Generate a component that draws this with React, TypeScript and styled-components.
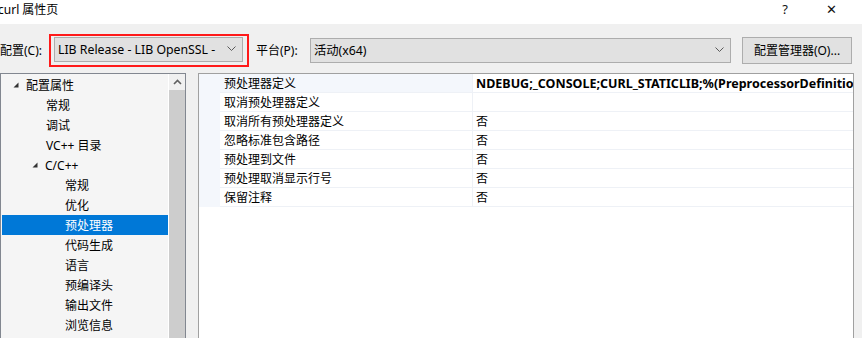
import React from 'react';
import styled, { createGlobalStyle } from 'styled-components';

const GlobalStyle = createGlobalStyle`
  html, body {
    margin: 0;
    padding: 0;
    background: #f0f0f0;
  }
  * {
    box-sizing: border-box;
  }
`;

const FONT = `"Segoe UI", "Noto Sans", "Noto Sans CJK SC", sans-serif`;

// Dialog shell
const Dialog = styled.div`
  width: 862px;
  height: 338px;
  overflow: hidden;
  background: #f0f0f0;
  font-family: ${FONT};
  font-size: 12px;
  color: #000;
  display: flex;
  flex-direction: column;
`;

const TitleBar = styled.div`
  height: 24px;
  background: #fff;
  display: flex;
  align-items: center;
  padding-right: 8px;
`;

const Title = styled.div`
  flex: 1;
  margin-left: -2px;
  margin-top: -6px;
  font-size: 12px;
`;

const TitleButton = styled.div`
  width: 46px;
  text-align: center;
  margin-top: -6px;
  font-size: 13px;
  color: #111;
`;

// Config toolbar
const Toolbar = styled.div`
  height: 48px;
  display: flex;
  align-items: center;
  padding-top: 4px;
`;

const Label = styled.span<{ $width: number }>`
  width: ${p => p.$width}px;
  flex-shrink: 0;
  white-space: nowrap;
`;

const Highlight = styled.div`
  border: 2px solid #ff1a1a;
  padding: 1px 4px 3px 3px;
  margin-right: 7px;
`;

const Combo = styled.div<{ $width: number }>`
  width: ${p => p.$width}px;
  height: 25px;
  background: #e1e1e1;
  border: 1px solid #adadad;
  display: flex;
  align-items: center;
  padding-left: 3px;
  padding-right: 6px;
  overflow: hidden;
`;

const ComboText = styled.span`
  flex: 1;
  min-width: 0;
  margin-right: 9px;
  white-space: nowrap;
  overflow: hidden;
  font-size: 12.3px;
`;

const Button = styled.div`
  margin-left: 11px;
  width: 110px;
  height: 27px;
  background: #e1e1e1;
  border: 1px solid #adadad;
  display: flex;
  align-items: center;
  justify-content: center;
  white-space: nowrap;
`;

// Body
const Body = styled.div`
  flex: 1;
  display: flex;
  align-items: stretch;
  padding-top: 1px;
`;

const TreePanel = styled.div`
  width: 186px;
  border: 1px solid #828790;
  border-bottom: none;
  background: #f5f5f5;
  display: flex;
`;

const TreeList = styled.div`
  flex: 1;
  padding-top: 1px;
  padding-left: 1px;
`;

const TreeRow = styled.div<{ $indent: number; $selected?: boolean }>`
  height: 20px;
  display: flex;
  align-items: center;
  padding-left: ${p => p.$indent}px;
  background: ${p => (p.$selected ? '#0078d7' : 'transparent')};
  color: ${p => (p.$selected ? '#fff' : '#000')};
  white-space: nowrap;
`;

const Expander = styled.span`
  width: 14px;
  display: inline-flex;
  align-items: center;
  padding-left: 1px;
`;

const ScrollBar = styled.div`
  width: 17px;
  background: #f0f0f0;
  border-left: 1px solid #fff;
  display: flex;
  flex-direction: column;
`;

const ScrollArrow = styled.div`
  height: 16px;
  display: flex;
  align-items: center;
  justify-content: center;
`;

const ScrollThumb = styled.div`
  flex: 1;
  background: #cdcdcd;
`;

const Grid = styled.div`
  margin-left: 12px;
  width: 656px;
  border: 1px solid #a0a0a0;
  border-bottom: none;
  background: #fff;
  display: flex;
  flex-direction: column;
`;

const GridRow = styled.div`
  height: 19px;
  display: flex;
`;

const Margin = styled.div`
  width: 21px;
  background: #f4f7fc;
`;

const NameCell = styled.div<{ $active?: boolean }>`
  width: 253px;
  border-bottom: 1px solid #eef1f6;
  border-right: 1px solid #eef1f6;
  background: ${p => (p.$active ? '#f4f7fc' : '#fff')};
  display: flex;
  align-items: center;
  padding-left: 4px;
  white-space: nowrap;
`;

const ValueCell = styled.div<{ $bold?: boolean }>`
  flex: 1;
  min-width: 0;
  border-bottom: 1px solid #eef1f6;
  display: flex;
  align-items: center;
  padding-left: 3px;
  white-space: nowrap;
  overflow: hidden;
  font-weight: ${p => (p.$bold ? 700 : 400)};
  font-size: ${p => (p.$bold ? '12.5px' : '12px')};
`;

const Chevron = () => (
  <svg width="9" height="6" viewBox="0 0 9 6">
    <path d="M0.5 0.5 L4.5 4.5 L8.5 0.5" fill="none" stroke="#5a5a5a" strokeWidth="1" />
  </svg>
);

const Triangle = () => (
  <svg width="6" height="6" viewBox="0 0 6 6">
    <path d="M5.5 0.5 L5.5 5.5 L0.5 5.5 Z" fill="#333" />
  </svg>
);

const UpCaret = () => (
  <svg width="9" height="6" viewBox="0 0 9 6">
    <path d="M1 5 L4.5 1.5 L8 5" fill="none" stroke="#606060" strokeWidth="1.6" />
  </svg>
);

const treeItems = [
  { label: '配置属性', indent: 10, expander: true },
  { label: '常规', indent: 30 },
  { label: '调试', indent: 30 },
  { label: 'VC++ 目录', indent: 30 },
  { label: 'C/C++', indent: 29, expander: true },
  { label: '常规', indent: 49 },
  { label: '优化', indent: 49 },
  { label: '预处理器', indent: 49, selected: true },
  { label: '代码生成', indent: 49 },
  { label: '语言', indent: 49 },
  { label: '预编译头', indent: 49 },
  { label: '输出文件', indent: 49 },
  { label: '浏览信息', indent: 49 },
];

const props = [
  { name: '预处理器定义', value: 'NDEBUG;_CONSOLE;CURL_STATICLIB;%(PreprocessorDefinitions)', bold: true },
  { name: '取消预处理器定义', value: '' },
  { name: '取消所有预处理器定义', value: '否' },
  { name: '忽略标准包含路径', value: '否' },
  { name: '预处理到文件', value: '否' },
  { name: '预处理取消显示行号', value: '否' },
  { name: '保留注释', value: '否' },
];

export default function App() {
  return (
    <Dialog>
      <GlobalStyle />
      <TitleBar>
        <Title>curl 属性页</Title>
        <TitleButton>?</TitleButton>
        <TitleButton>✕</TitleButton>
      </TitleBar>

      <Toolbar>
        <Label $width={49}>配置(C):</Label>
        <Highlight>
          <Combo $width={189}>
            <ComboText>LIB Release - LIB OpenSSL - LIB</ComboText>
            <Chevron />
          </Combo>
        </Highlight>
        <Label $width={54}>平台(P):</Label>
        <Combo $width={421}>
          <ComboText>活动(x64)</ComboText>
          <Chevron />
        </Combo>
        <Button>配置管理器(O)...</Button>
      </Toolbar>

      <Body>
        <TreePanel>
          <TreeList>
            {treeItems.map((item, i) => (
              <TreeRow key={i} $indent={item.indent} $selected={item.selected}>
                <Expander>{item.expander && <Triangle />}</Expander>
                {item.label}
              </TreeRow>
            ))}
          </TreeList>
          <ScrollBar>
            <ScrollArrow>
              <UpCaret />
            </ScrollArrow>
            <ScrollThumb />
          </ScrollBar>
        </TreePanel>

        <Grid>
          {props.map((p, i) => (
            <GridRow key={i}>
              <Margin />
              <NameCell $active={i === 0}>{p.name}</NameCell>
              <ValueCell $bold={p.bold}>{p.value}</ValueCell>
            </GridRow>
          ))}
        </Grid>
      </Body>
    </Dialog>
  );
}
